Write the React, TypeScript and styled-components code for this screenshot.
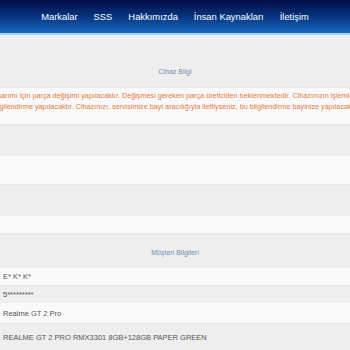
import React from 'react';
import styled, { createGlobalStyle } from 'styled-components';

const GlobalStyle = createGlobalStyle`
  html, body {
    margin: 0;
    padding: 0;
    background: #eeeeee;
    font-family: 'Liberation Sans', Arial, sans-serif;
  }
`;

const Header = styled.header`
  height: 33px;
  background: linear-gradient(to bottom, #000c44 0%, #06307a 45%, #1768c0 100%);
  border-bottom: 2px solid #9fd4f2;
  display: flex;
  align-items: center;
  justify-content: center;
  gap: 16px;
`;

const NavLink = styled.a`
  color: #ffffff;
  font-size: 9.4px;
  text-decoration: none;
  white-space: nowrap;
`;

const Page = styled.main`
  display: flex;
  flex-direction: column;
`;

const SectionTitle = styled.div<{ $height: number; $bottom: number }>`
  height: ${(p) => p.$height}px;
  padding-bottom: ${(p) => p.$bottom}px;
  background: #eeeeee;
  display: flex;
  align-items: flex-end;
  justify-content: center;
  color: #6f8db5;
  font-size: 7px;
  box-sizing: border-box;
`;

const Notice = styled.div`
  height: 37px;
  background: #f9f9f9;
  border-top: 1px solid #e8e8e8;
  box-sizing: border-box;
  padding-top: 3px;
  display: flex;
  flex-direction: column;
  overflow: hidden;
`;

const NoticeLine = styled.div<{ $lead?: number }>`
  display: flex;
  justify-content: center;
  padding-left: ${(p) => p.$lead ?? 0}px;
  white-space: nowrap;
  color: #e47a3c;
  font-size: 7.25px;
  line-height: 10.5px;
`;

const Row = styled.div<{ $alt?: boolean; $height: number }>`
  height: ${(p) => p.$height}px;
  background: ${(p) => (p.$alt ? '#eeeeee' : '#f9f9f9')};
  border-top: 1px solid ${(p) => (p.$alt ? '#e6e6e6' : '#f0f0f0')};
  box-sizing: border-box;
  display: flex;
  align-items: center;
  padding-left: 3px;
  color: #555555;
  font-size: 7.5px;
  white-space: nowrap;
  overflow: hidden;
`;

const emptyRows = [
  { alt: true, h: 31 },
  { alt: false, h: 29 },
  { alt: true, h: 31 },
  { alt: false, h: 18 },
];

const customerRows = [
  { text: 'E* K* K*', alt: false, h: 18 },
  { text: '5*********', alt: true, h: 17 },
  { text: 'Realme GT 2 Pro', alt: false, h: 21 },
  { text: 'REALME GT 2 PRO RMX3301 8GB+128GB PAPER GREEN', alt: true, h: 27 },
];

export default function App() {
  return (
    <>
      <GlobalStyle />
      <Header>
        <NavLink href="#">Markalar</NavLink>
        <NavLink href="#">SSS</NavLink>
        <NavLink href="#">Hakkımızda</NavLink>
        <NavLink href="#">İnsan Kaynakları</NavLink>
        <NavLink href="#">İletişim</NavLink>
      </Header>
      <Page>
        <SectionTitle $height={52} $bottom={12}>Cihaz Bilgi</SectionTitle>
        <Notice>
          <NoticeLine $lead={20}>
            Cihazınızın onarımı için parça değişimi yapılacaktır. Değişmesi gereken parça üreticiden beklenmektedir. Cihazınızın işlemleri tamamlandığında
          </NoticeLine>
          <NoticeLine $lead={2}>
            bilgilendirme yapılacaktır. Cihazınızı, servisimize bayi aracılığıyla ilettiyseniz, bu bilgilendirme bayinize yapılacaktır.
          </NoticeLine>
        </Notice>
        {emptyRows.map((r, i) => (
          <Row key={i} $alt={r.alt} $height={r.h} />
        ))}
        <SectionTitle $height={34} $bottom={11}>Müşteri Bilgileri</SectionTitle>
        {customerRows.map((r, i) => (
          <Row key={i} $alt={r.alt} $height={r.h}>
            {r.text}
          </Row>
        ))}
      </Page>
    </>
  );
}
